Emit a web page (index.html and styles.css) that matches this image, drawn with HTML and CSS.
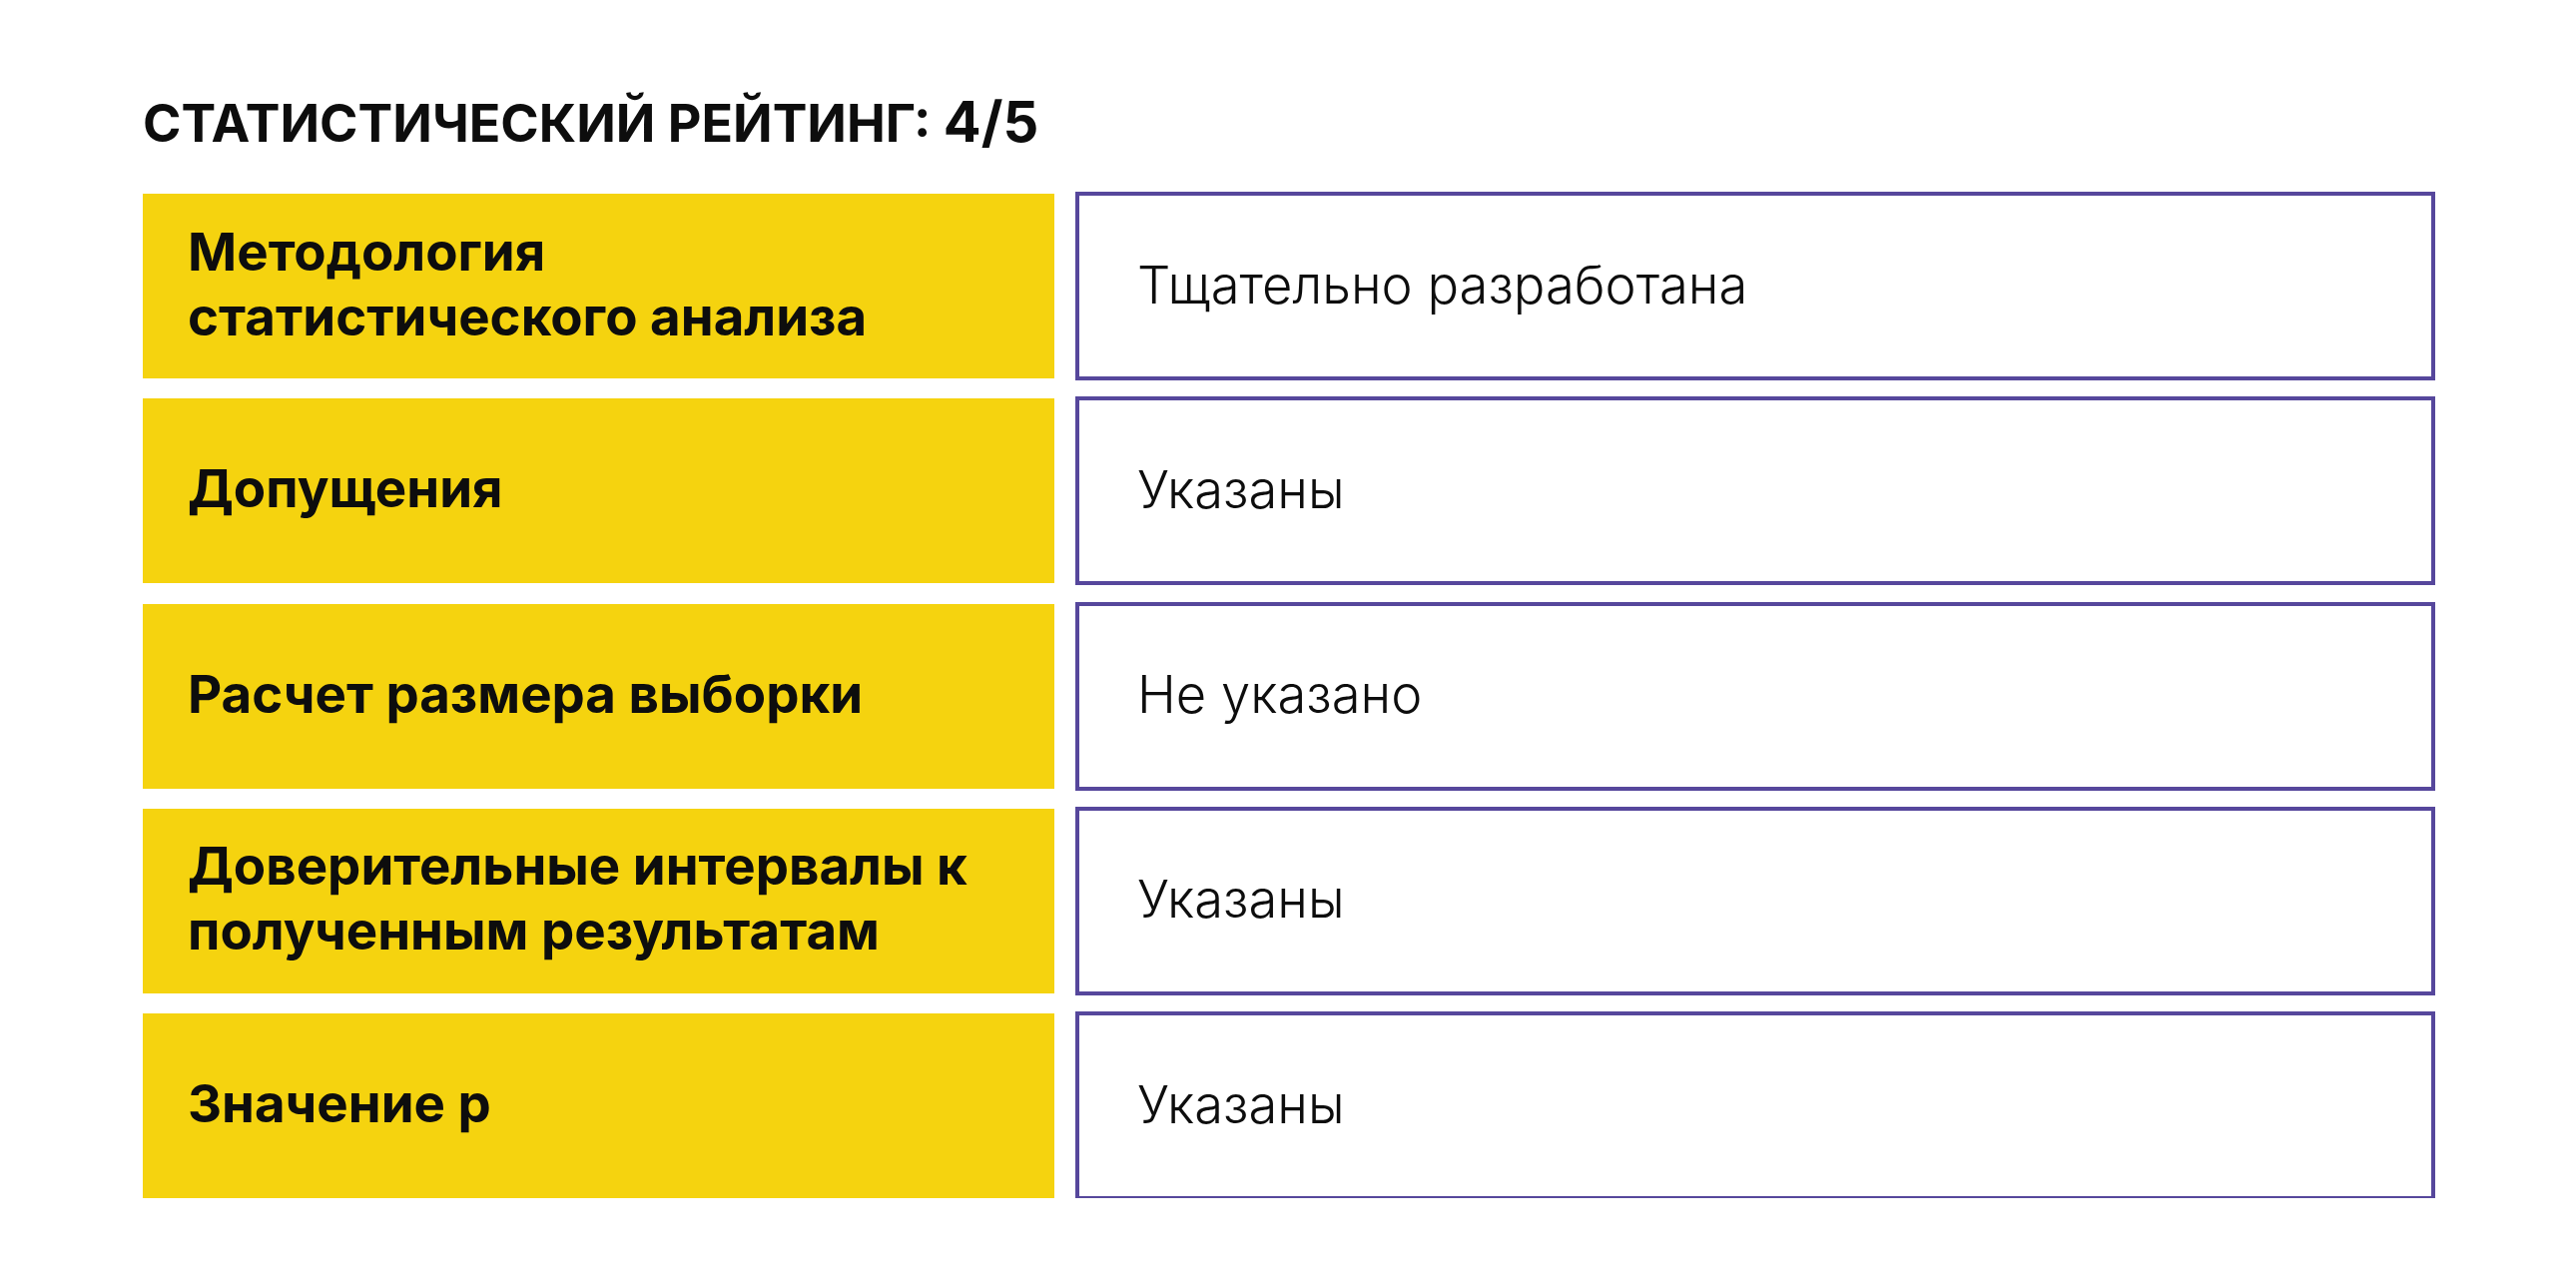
FILE: index.html
```html
<!DOCTYPE html>
<html lang="ru">
<head>
<meta charset="utf-8">
<title>Статистический рейтинг</title>
<link rel="stylesheet" href="styles.css">
</head>
<body>
<main class="page">
  <h1 class="title">СТАТИСТИЧЕСКИЙ РЕЙТИНГ: <span class="score">4/5</span></h1>
  <div class="table">
    <div class="label">Методология<br>статистического анализа</div>
    <div class="value">Тщательно разработана</div>
    <div class="label">Допущения</div>
    <div class="value">Указаны</div>
    <div class="label">Расчет размера выборки</div>
    <div class="value">Не указано</div>
    <div class="label">Доверительные интервалы к<br>полученным результатам</div>
    <div class="value">Указаны</div>
    <div class="label">Значение p</div>
    <div class="value">Указаны</div>
  </div>
</main>
</body>
</html>
```

FILE: styles.css
```css
html, body {
  margin: 0;
  padding: 0;
  background: #ffffff;
}
.page {
  padding: 92px 0 0 143px;
  font-family: Inter, "Noto Sans", sans-serif;
  color: #0d0d0d;
}
.title {
  margin: 0 0 40px 0;
  font-size: 52px;
  line-height: 60px;
  font-weight: 700;
  letter-spacing: 0;
}
.score {
  font-size: 56px;
}
.table {
  display: grid;
  grid-template-columns: 913px 1362px;
  grid-auto-rows: 185px;
  column-gap: 21px;
  row-gap: 20.25px;
}
.label {
  background: #f5d30f;
  display: flex;
  align-items: center;
  padding: 0 0 4px 45px;
  font-size: 52.8px;
  line-height: 65px;
  font-weight: 700;
}
.value {
  box-sizing: border-box;
  height: 189px;
  margin: -2px 0;
  border: 4px solid #56479c;
  display: flex;
  align-items: center;
  padding: 0 0 4px 58px;
  font-size: 52.5px;
  font-weight: 300;
}
```
